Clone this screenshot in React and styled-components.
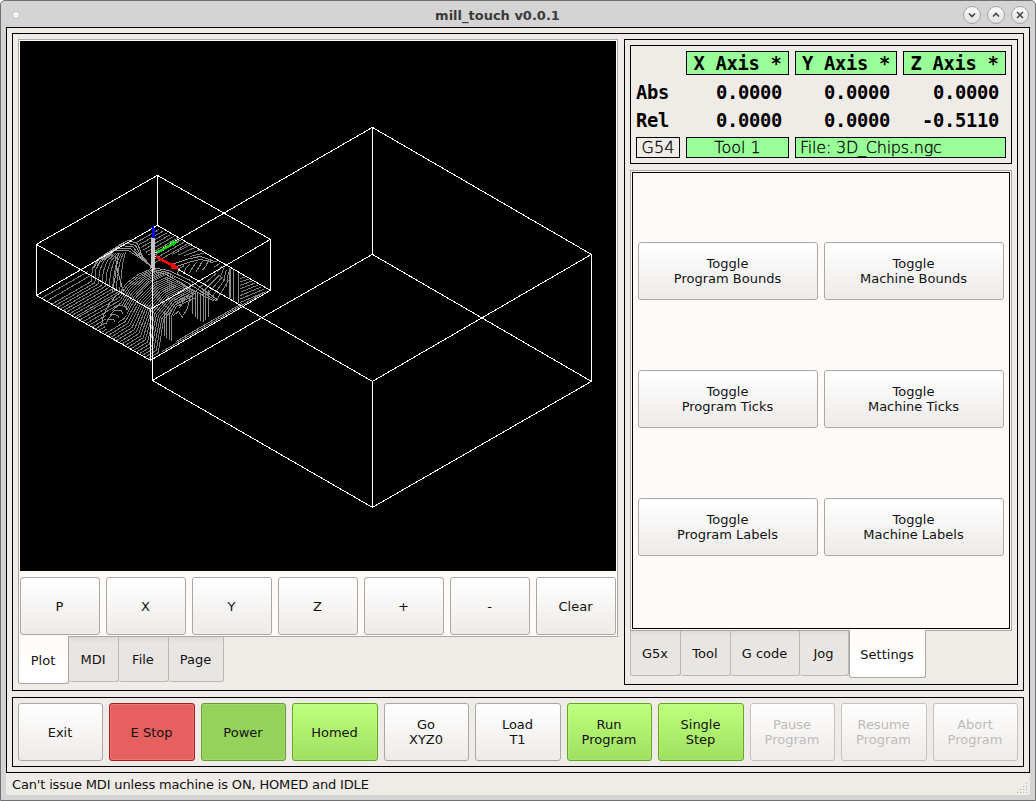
import React from "react";
import styled, { createGlobalStyle, css } from "styled-components";

const Global = createGlobalStyle`
  * { box-sizing: border-box; }
  body { margin: 0; background: #fff; }
`;

const Window = styled.div`
  width: 1036px;
  height: 801px;
  display: flex;
  flex-direction: column;
  border: 1px solid #6f6f6f;
  border-radius: 5px 5px 0 0;
  background: #d4d4d4;
  font: 13px/15px "DejaVu Sans", sans-serif;
  color: #111;
  padding: 0 5px 5px;
`;

const TitleBar = styled.header`
  height: 26px;
  flex: none;
  display: grid;
  grid-template-columns: 67px 1fr 67px;
  align-items: center;
  padding-left: 6px;
`;

const MenuDot = styled.span`
  width: 8px;
  height: 8px;
  border-radius: 50%;
  background: #f8f8f8;
  border: 1px solid #c2c2c2;
`;

const Title = styled.h1`
  margin: 0;
  padding: 1px 47px 0 0;
  text-align: center;
  font-size: 13px;
  line-height: 27px;
  font-weight: bold;
  color: #3a3a3a;
`;

const WindowButtons = styled.div`
  display: flex;
  gap: 6px;
`;

const RoundButton = styled.button`
  width: 18px;
  height: 18px;
  flex: none;
  padding: 0;
  border: 1px solid #a2a2a2;
  border-radius: 50%;
  background: linear-gradient(#fafafa, #e2e2e2);
  display: flex;
  align-items: center;
  justify-content: center;
`;

const Client = styled.main`
  width: 1024px;
  height: 746px;
  flex: none;
  border: 1px solid #000;
  background: #efebe7;
  padding: 5px;
  display: flex;
  flex-direction: column;
  gap: 6px;
`;

const Frame = styled.section`
  border: 1px solid #000;
  padding: 5px;
  background: #efebe7;
`;

const TopFrame = styled(Frame)`
  height: 658px;
  display: flex;
  gap: 6px;
  align-items: flex-start;
  background: linear-gradient(#f1e9e6, #efebe7 8px);
`;

const RightFrame = styled(Frame)`
  width: 394px;
  height: 646px;
`;

const BottomFrame = styled(Frame)`
  height: 70px;
  display: grid;
  grid-template-columns: 85px 86px 85px 86px 85px 86px 85px 86px 85px 86px 85px;
  gap: 6px;
`;

const Tabbed = styled.div`
  width: ${(p) => p.$width}px;
`;

const Pane = styled.div`
  height: ${(p) => p.$height}px;
  border: 1px solid #aaa7a4;
  background: #fefaf7;
  padding: 1px;
`;

const TabRow = styled.nav`
  display: flex;
  align-items: flex-start;
`;

const Tab = styled.button`
  width: ${(p) => p.$width}px;
  height: 45px;
  padding: 0 1px 0 0;
  border: 1px solid #bcb8b5;
  border-top: 0;
  border-left-width: ${(p) => (p.$first ? 1 : 0)}px;
  border-radius: 0 0 3px 3px;
  background: linear-gradient(#dedad7, #e9e5e2 6px);
  font: inherit;
  color: #111;
  ${(p) =>
    p.$active &&
    css`
      height: 48px;
      margin-top: -1px;
      padding-top: 2px;
      border: 1px solid #aaa7a4;
      border-top: 0;
      background: linear-gradient(#fefaf7, #fff 60%);
      position: relative;
    `}
`;

const PlotPane = styled(Pane)`
  display: flex;
  flex-direction: column;
  gap: 6px;
`;

const PlotCanvas = styled.svg`
  display: block;
  width: 596px;
  height: 530px;
  background: #000;
`;

const ViewButtons = styled.div`
  display: grid;
  grid-template-columns: repeat(7, 80px);
  gap: 6px;
`;

const tones = {
  plain: ["#aaa8a5", "linear-gradient(#fff, #edebe9)", "#111"],
  red: ["#ad1c1c", "#e76060", "#111"],
  green: ["#62a02c", "#94d25b", "#111"],
  lime: ["#62a81f", "linear-gradient(#bfff7e, #a0e060)", "#111"],
  off: ["#c5c2bf", "linear-gradient(#fefefe, #eeebe8)", "#bdbbb9"],
};

const PushButton = styled.button`
  height: 58px;
  padding: 0 1px 0 0;
  border: 1px solid ${(p) => tones[p.$tone || "plain"][0]};
  border-radius: 3px;
  background: ${(p) => tones[p.$tone || "plain"][1]};
  color: ${(p) => tones[p.$tone || "plain"][2]};
  box-shadow: inset 0 0 0 1px rgba(255, 255, 255, 0.12);
  font: inherit;
  white-space: pre-line;
  text-align: center;
`;

const Dro = styled(Frame)`
  height: 119px;
  width: 382px;
  display: grid;
  grid-template-columns: 44px 103px 102px 103px;
  grid-template-rows: 24px 22px 22px 21px;
  gap: 6px;
  margin-bottom: 6px;
`;

const mono = css`
  font: bold 18.8px/24px "DejaVu Sans Mono", monospace;
  letter-spacing: -0.31px;
  white-space: pre;
  color: #000;
`;

const AxisHead = styled.div`
  ${mono}
  border: 1px solid #000;
  background: #99ff99;
  text-align: center;
`;

const RowName = styled.div`
  ${mono}
`;

const Reading = styled.div`
  ${mono}
  text-align: right;
  padding-right: 7px;
`;

const Info = styled.div`
  border: 1px solid #000;
  font: 200 16px/19px "DejaVu Sans Light", "DejaVu Sans", sans-serif;
  letter-spacing: ${(p) => (p.$wide ? "-0.22px" : "0")};
  color: #000;
  -webkit-text-stroke: 0.3px #000;
  background: ${(p) => (p.$lit ? "#99ff99" : "transparent")};
  text-align: ${(p) => (p.$wide ? "left" : "center")};
  padding-left: ${(p) => (p.$wide ? 4 : 0)}px;
  grid-column: ${(p) => (p.$wide ? "span 2" : "auto")};
  white-space: nowrap;
`;

const SettingsBody = styled.div`
  height: 457px;
  border: 1px solid #000;
  display: grid;
  grid-template-columns: 180px 180px;
  grid-auto-rows: 58px;
  gap: 70px 6px;
  padding: 69px 5px;
`;

const StatusBar = styled.footer`
  height: 22px;
  flex: none;
  background: #efebe7;
  display: flex;
  align-items: center;
  justify-content: space-between;
  padding: 1px 2px 0 6px;
  letter-spacing: -0.155px;
`;

const line = (pts) => pts.map((p) => p.join(",")).join(" ");

/* Evenly blended polylines between two outlines with the same number of points. */
const sweep = (a, b, n) =>
  Array.from({ length: n }, (_, i) => {
    const t = n > 1 ? i / (n - 1) : 0;
    return a.map(([x, y], k) => [
      +(x + (b[k][0] - x) * t).toFixed(1),
      +(y + (b[k][1] - y) * t).toFixed(1),
    ]);
  });

const toolpath = [
  ...sweep([[41, 298], [88, 271]], [[46, 301], [92, 274]], 2),
  ...sweep(
    [[51, 304], [91, 281], [92, 268], [98, 258], [110, 253]],
    [[74, 317], [119, 291], [121, 276], [122, 264], [125, 252]],
    9
  ),
  ...sweep(
    [[76, 318], [118, 294], [126, 283], [138, 274], [150, 269]],
    [[101, 332], [124, 318], [135, 298], [150, 282], [168, 273]],
    9
  ),
  ...sweep(
    [[104, 334], [125, 321], [138, 298], [153, 283], [171, 275]],
    [[148, 358], [158, 352], [163, 320], [176, 303], [196, 292]],
    16
  ),
  ...sweep([[136, 242], [159, 229]], [[155, 262], [188, 243]], 9),
  ...sweep([[172, 254], [192, 243]], [[190, 256], [206, 252]], 4),
  ...sweep([[210, 262], [217, 261]], [[226, 287], [228, 272]], 6),
  ...sweep([[240, 278], [247, 276]], [[240, 302], [266, 291]], 8),
  ...sweep([[196, 290], [216, 273]], [[216, 300], [228, 280]], 5),
];

const hollows = [
  [[104, 327], [106, 314], [114, 309], [122, 305], [127, 309], [126, 315], [108, 330]],
  [[129, 258], [136, 266], [142, 268], [129, 272]],
  [[172, 341], [173, 314], [182, 304], [196, 298], [203, 325]],
  [[208, 320], [209, 305], [236, 304], [262, 294], [240, 306]],
];

const ridges = [
  ...sweep(
    [[93, 268], [100, 257], [112, 250], [128, 250], [140, 258], [153, 268]],
    [[108, 256], [118, 245], [128, 240], [137, 243], [142, 256], [153, 269]],
    5
  ),
  ...sweep([[150, 267], [168, 270], [190, 280], [218, 300]], [[150, 270], [166, 274], [186, 286], [214, 301]], 3),
  ...sweep([[172, 264], [186, 259], [200, 256], [214, 261]], [[174, 267], [188, 262], [200, 259], [212, 262]], 2),
  [[124, 289], [115, 296], [108, 305], [103, 315], [101, 326]],
  [[115, 256], [117, 270], [122, 288]],
  [[118, 253], [115, 275], [112, 292]],
];

const faces = [
  ...sweep([[105, 324], [108, 319], [113, 319], [115, 322]], [[112, 310], [118, 305], [125, 306], [127, 310]], 4),
  ...sweep([[164, 336], [164, 312], [172, 301], [184, 294]], [[171, 341], [171, 316], [176, 306], [196, 297]], 4),
  [[173, 315], [178, 311], [183, 318]],
  [[183, 315], [187, 308], [190, 296]],
  [[179, 308], [184, 299], [188, 295]],
  ...sweep([[192, 293], [192, 314]], [[200, 293], [200, 321]], 4),
  ...sweep([[203, 290], [203, 322]], [[208, 290], [208, 317]], 3),
  ...sweep([[176, 275], [179, 268], [184, 265]], [[202, 270], [206, 265], [208, 259]], 5),
  ...sweep([[229, 268], [229, 298]], [[238, 272], [238, 303]], 3),
  [[230, 269], [230, 298]],
  ...sweep([[162, 351], [200, 329], [262, 293]], [[176, 341], [200, 327], [242, 303]], 2),
];

const machineBox = [
  [[372, 127], [591, 254], [591, 381], [372, 507], [152, 380], [152, 254], [372, 127]],
  [[372, 127], [372, 254], [591, 381]],
  [[372, 254], [152, 380]],
  [[372, 507], [372, 381], [591, 254]],
  [[372, 381], [152, 254]],
];

const programBox = [
  [[157, 175], [270, 239], [270, 290], [150, 360], [36, 295], [36, 244], [157, 175]],
  [[157, 175], [157, 225], [270, 290]],
  [[157, 225], [36, 295]],
  [[150, 360], [150, 309], [270, 239]],
  [[150, 309], [36, 244]],
];

const Lines = ({ items, stroke }) => (
  <g fill="none" stroke={stroke}>
    {items.map((pts, i) => (
      <polyline key={i} points={line(pts)} />
    ))}
  </g>
);

const Plot = () => (
  <PlotCanvas viewBox="20 41 596 530" shapeRendering="crispEdges">
    <g transform="translate(.4 .4)">
      <Lines items={toolpath} stroke="#7c7c7c" />
      {hollows.map((pts, i) => (
        <polygon key={i} points={line(pts)} fill="#000" />
      ))}
      <Lines items={ridges} stroke="#969696" />
      <Lines items={faces} stroke="#8a8a8a" />
      <Lines items={machineBox} stroke="#fff" />
      <Lines items={programBox} stroke="#fff" />
      <path d="M151 238h4v30l-2 2-2-2z" fill="#c4c4c4" />
      <path d="M153 224l2 6v8h-3v-8h-1z" fill="#00f" />
      <path d="M156 251l15-8-1-2 9-1-6 6-1-1-15 8z" fill="#00dc00" />
      <path d="M156 255l15 8 2-1 6 7-9-1 1-2-15-8z" fill="#f00" />
    </g>
  </PlotCanvas>
);

const Glyph = ({ d }) => (
  <svg width="10" height="10" viewBox="0 0 10 10" fill="none" stroke="#444" strokeWidth="1.6">
    <path d={d} />
  </svg>
);

const GripMark = styled.svg`
  align-self: flex-end;
`;

const Grip = () => (
  <GripMark width="12" height="12" viewBox="0 0 12 12" fill="#b5b0ab">
    {[0, 1, 2, 3].map((r) =>
      Array.from({ length: r + 1 }, (_, c) => (
        <rect key={`${r}-${c}`} x={10 - c * 3} y={r * 3} width="1" height="1" />
      ))
    )}
  </GripMark>
);

const actions = [
  ["Exit"],
  ["E Stop", "red"],
  ["Power", "green"],
  ["Homed", "lime"],
  ["Go\nXYZ0"],
  ["Load\nT1"],
  ["Run\nProgram", "lime"],
  ["Single\nStep", "lime"],
  ["Pause\nProgram", "off"],
  ["Resume\nProgram", "off"],
  ["Abort\nProgram", "off"],
];

const toggles = ["Bounds", "Ticks", "Labels"].flatMap((k) => [
  `Toggle\nProgram ${k}`,
  `Toggle\nMachine ${k}`,
]);

const Tabs = ({ items, active }) => (
  <TabRow>
    {items.map(([name, width], i) => (
      <Tab key={name} $width={width} $first={i === 0} $active={name === active}>
        {name}
      </Tab>
    ))}
  </TabRow>
);

export default function App() {
  return (
    <>
      <Global />
      <Window>
        <TitleBar>
          <MenuDot />
          <Title>mill_touch v0.0.1</Title>
          <WindowButtons>
            <RoundButton><Glyph d="M2 3.5l3 3 3-3" /></RoundButton>
            <RoundButton><Glyph d="M2 6.5l3-3 3 3" /></RoundButton>
            <RoundButton><Glyph d="M2 2l6 6M8 2l-6 6" /></RoundButton>
          </WindowButtons>
        </TitleBar>
        <Client>
          <TopFrame>
            <Tabbed $width={600}>
              <PlotPane $height={598}>
                <Plot />
                <ViewButtons>
                  {["P", "X", "Y", "Z", "+", "-", "Clear"].map((t) => (
                    <PushButton key={t}>{t}</PushButton>
                  ))}
                </ViewButtons>
              </PlotPane>
              <Tabs active="Plot" items={[["Plot", 51], ["MDI", 50], ["File", 50], ["Page", 55]]} />
            </Tabbed>
            <RightFrame>
              <Dro>
                <span />
                <AxisHead>X Axis *</AxisHead>
                <AxisHead>Y Axis *</AxisHead>
                <AxisHead>Z Axis *</AxisHead>
                <RowName>Abs</RowName>
                <Reading>0.0000</Reading>
                <Reading>0.0000</Reading>
                <Reading>0.0000</Reading>
                <RowName>Rel</RowName>
                <Reading>0.0000</Reading>
                <Reading>0.0000</Reading>
                <Reading>-0.5110</Reading>
                <Info>G54</Info>
                <Info $lit>Tool 1</Info>
                <Info $lit $wide>File: 3D_Chips.ngc</Info>
              </Dro>
              <Tabbed $width={382}>
                <Pane $height={461}>
                  <SettingsBody>
                    {toggles.map((t) => (
                      <PushButton key={t}>{t}</PushButton>
                    ))}
                  </SettingsBody>
                </Pane>
                <Tabs
                  active="Settings"
                  items={[["G5x", 51], ["Tool", 50], ["G code", 69], ["Jog", 49], ["Settings", 77]]}
                />
              </Tabbed>
            </RightFrame>
          </TopFrame>
          <BottomFrame>
            {actions.map(([label, tone]) => (
              <PushButton key={label} $tone={tone}>{label}</PushButton>
            ))}
          </BottomFrame>
        </Client>
        <StatusBar>
          Can't issue MDI unless machine is ON, HOMED and IDLE
          <Grip />
        </StatusBar>
      </Window>
    </>
  );
}
